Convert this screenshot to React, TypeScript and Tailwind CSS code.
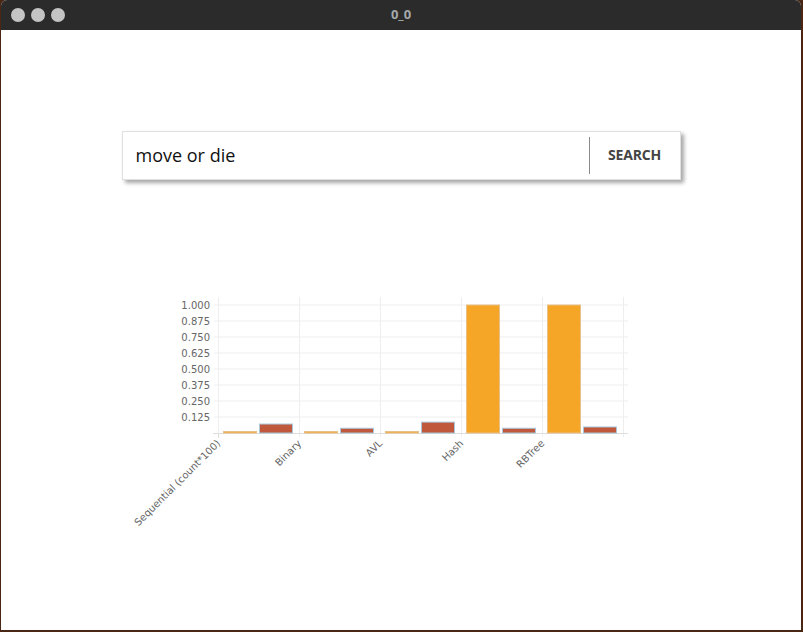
import React from 'react';

type Row = { label: string; linear: number; tree: number };

const rows: Row[] = [
  { label: 'Sequential (count*100)', linear: 0.012, tree: 0.07 },
  { label: 'Binary', linear: 0.012, tree: 0.037 },
  { label: 'AVL', linear: 0.012, tree: 0.085 },
  { label: 'Hash', linear: 1, tree: 0.037 },
  { label: 'RBTree', linear: 1, tree: 0.047 },
];

const ticks = [0.125, 0.25, 0.375, 0.5, 0.625, 0.75, 0.875, 1];

// page coords are used directly through the viewBox
const X0 = 218;
const BAND = 81;
const Y0 = 433;
const H = 128;

function Chart() {
  return (
    <svg
      width={530}
      height={250}
      viewBox="110 290 530 250"
      className="block ml-[109px] mt-[110px]"
      style={{ fontFamily: '"DejaVu Sans", sans-serif' }}
    >
      {/* grid */}
      {ticks.map((t) => (
        <line key={t} x1={214} x2={628} y1={Y0 - t * H} y2={Y0 - t * H} stroke="#eeeeee" strokeWidth={1} />
      ))}
      {[0, 1, 2, 3, 4, 5].map((i) => (
        <line key={i} x1={X0 + i * BAND + 0.5} x2={X0 + i * BAND + 0.5} y1={297} y2={437} stroke="#eeeeee" strokeWidth={1} />
      ))}
      <line x1={213} x2={628} y1={Y0 + 0.5} y2={Y0 + 0.5} stroke="#dddddd" strokeWidth={1} />
      <line x1={218.5} x2={218.5} y1={Y0} y2={438} stroke="#dddddd" strokeWidth={1} />

      {/* y labels */}
      {ticks.map((t) => (
        <text key={t} x={210} y={Y0 - t * H} dy="0.35em" textAnchor="end" fontSize={10} fill="#666666">
          {t.toFixed(3)}
        </text>
      ))}

      {/* bars */}
      {rows.map((r, i) => {
        const g = X0 + i * BAND;
        const h1 = Math.max(r.linear * H, 1.5);
        const h2 = r.tree * H;
        return (
          <g key={r.label}>
            <rect x={g + 5.5} y={Y0 - h1} width={33} height={h1} fill="#f5a627" stroke="#e6c08a" strokeWidth={1} />
            <rect x={g + 41.5} y={Y0 - h2} width={33} height={h2} fill="#c0583b" stroke="#a9c6da" strokeWidth={1} />
          </g>
        );
      })}

      {/* x labels */}
      {rows.map((r, i) => (
        <text
          key={r.label}
          transform={`translate(${X0 + i * BAND + 3} 444) rotate(-45)`}
          textAnchor="end"
          fontSize={10}
          fill="#666666"
        >
          {r.label}
        </text>
      ))}
    </svg>
  );
}

export default function App() {
  return (
    <div className="w-[803px] h-[632px] bg-[#4a2614] flex flex-col">
      <div className="flex-1 flex flex-col ml-px mr-[2px] mb-[2px] bg-white overflow-hidden rounded-t-[6px]">
        {/* Title bar */}
        <div className="h-[30px] shrink-0 bg-[#2b2b2b] relative flex items-center pl-[10px] gap-[6px]">
          <span className="w-[14px] h-[14px] rounded-full bg-[#c4c4c4]" />
          <span className="w-[14px] h-[14px] rounded-full bg-[#c4c4c4]" />
          <span className="w-[14px] h-[14px] rounded-full bg-[#c4c4c4]" />
          <div
            className="absolute inset-0 flex items-center justify-center text-[13px] font-bold text-[#a5a8ac]"
            style={{ fontFamily: '"Open Sans", sans-serif' }}
          >
            0_0
          </div>
        </div>

        {/* Content */}
        <div className="flex-1 pt-[101px]">
          <div
            className="mx-auto w-[559px] h-[49px] border border-[#e0e0e0] bg-white flex items-center shadow-[3px_3px_4px_rgba(0,0,0,0.35)]"
            style={{ fontFamily: '"Open Sans", sans-serif' }}
          >
            <div className="flex-1 pl-[13px] text-[18px] text-[#111111]">move or die</div>
            <div className="w-px h-[37px] bg-[#8a8a8a]" />
            <div className="w-[90px] pb-[3px] text-center text-[14px] font-bold text-[#444444] tracking-[-0.2px]">SEARCH</div>
          </div>
          <Chart />
        </div>
      </div>
    </div>
  );
}
